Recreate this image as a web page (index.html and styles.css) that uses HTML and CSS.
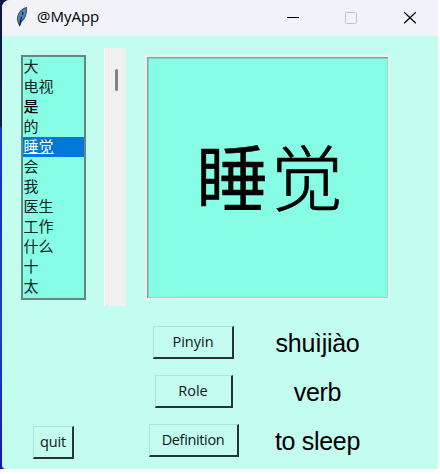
FILE: index.html
```html
<!DOCTYPE html>
<html lang="en">
<head>
<meta charset="utf-8">
<title>@MyApp</title>
<link rel="stylesheet" href="styles.css">
</head>
<body>
<div class="desktop">
  <div class="window">
    <header class="titlebar">
      <svg class="feather" width="14" height="22" viewBox="0 0 14 22">
        <path d="M11.500 1.500C8 2 4 6 2.700 10.500L2.500 14.500 4.500 19.500 6.500 15.500C10 12.500 11.800 6.500 11.500 1.500Z" fill="#4c88d0" stroke="#4b5158" stroke-width="1.1"/>
        <path d="M8 6L7.300 9M6.500 10.500L4.600 19.500" fill="none" stroke="#14202e" stroke-width="1.3"/>
      </svg>
      <span class="title">@MyApp</span>
      <svg class="controls" width="132" height="14" viewBox="0 0 132 14">
        <path d="M1 7.500H13" stroke="#000"/>
        <rect x="59.500" y="2.500" width="11" height="11" rx="1" fill="none" stroke="#c2c3ca"/>
        <path d="M118.200 2.200L129.800 13.300M129.800 2.200L118.200 13.300" stroke="#000" stroke-width="1.200"/>
      </svg>
    </header>
    <main class="client">
      <aside class="sidebar">
        <ul class="list">
          <li>大</li><li>电视</li><li class="heavy">是</li><li>的</li><li class="selected">睡觉</li><li>会</li>
          <li>我</li><li>医生</li><li>工作</li><li>什么</li><li>十</li><li>太</li>
        </ul>
        <button class="btn quit">quit</button>
      </aside>
      <div class="scrollbar"><div class="thumb"></div></div>
      <section class="card-area">
        <div class="card"><span class="strong">睡</span><span class="light">觉</span></div>
        <div class="answers">
          <div class="cell"><button class="btn pinyin">Pinyin</button></div><div class="answer">shuìjiào</div>
          <div class="cell"><button class="btn role">Role</button></div><div class="answer">verb</div>
          <div class="cell"><button class="btn definition">Definition</button></div><div class="answer">to sleep</div>
        </div>
      </section>
    </main>
  </div>
</div>
</body>
</html>
```
FILE: styles.css
```css
* { box-sizing: border-box; }
body { margin: 0; background: #fff; overflow: hidden; }
.desktop {
  width: 438px; height: 469px; padding-left: 2px;
  background: linear-gradient(#0b1745 0, #0d1c50 126px, #1a35d2 128px, #1535c8 220px, #1a3fd0 330px, #1117b8 469px);
}
.window {
  height: 469px; overflow: hidden; background: #c3fdef;
  border-radius: 8px 0 0 4px;
  display: flex; flex-direction: column;
}
.titlebar {
  height: 36px; flex: none; background: #f1f3f9;
  display: flex; align-items: center;
}
.feather { margin: -3px 0 0 13px; }
.title {
  margin: -4px 0 0 8px; width: 80px;
  font: 15px/20px "Open Sans", sans-serif; color: #000;
}
.controls { margin: -3px 0 0 169px; flex: none; }
.client { flex: 1; display: flex; padding-left: 19px; }
.sidebar { width: 83px; padding-top: 19px; display: flex; flex-direction: column; align-items: flex-start; }
.list {
  margin: 0; padding: 0; list-style: none; width: 65px; height: 245px;
  background: #86fde4; border: 2px solid #63877e;
  font: 15px/18px "Noto Sans CJK SC", sans-serif; color: #10241f;
}
.list li { height: 20px; padding-left: .6px; }
.list .heavy { font-weight: 500; color: #000; }
.list .selected { background: #0078d7; color: #fff; text-decoration: underline; }
.btn {
  height: 33px; padding: 0; border: 1px solid #aee5d8;
  border-right: 2px solid #27332f; border-bottom: 2px solid #27332f;
  border-radius: 0; background: #c3fdef; color: #101614;
  font: 14.5px/20px "Open Sans", sans-serif;
}
.quit { width: 41px; margin: 126px 0 0 12px; letter-spacing: -.2px; }
.scrollbar {
  width: 22px; height: 258px; margin-top: 12px; padding: 21px 0 0 10px;
  background: #f0f0f0; border-left: 1px solid #fff;
}
.thumb { width: 3px; height: 22px; border-radius: 2px; background: #858585; }
.card-area { margin: 19px 0 0 19px; width: 245px; }
.card {
  height: 245px; background: #86fde4; border: 2px solid #ededed;
  box-shadow: inset 1px 1px #7fa39b, inset 2px 2px #7bd5c2, inset -1px -1px #7be6d0;
  display: flex; align-items: center; justify-content: center; gap: 3px;
  padding: 0 0 7px 4px;
  font: 72px/100px "Noto Sans CJK SC", sans-serif; color: #000;
}
.strong { -webkit-text-stroke: .4px #000; }
.light { font-weight: 300; -webkit-text-stroke: .7px #000; }
.answers {
  display: grid; grid-template-columns: 97px 150px;
  grid-auto-rows: 49px; margin-top: 18px;
}
.cell { padding-top: 8px; display: flex; justify-content: center; align-items: flex-start; }
.pinyin { width: 81px; }
.role { width: 78px; }
.definition { width: 90px; letter-spacing: -.35px; }
.answer {
  text-align: center; padding: 10px 0 0 1px; color: #000;
  font: 25px/30px "Liberation Sans", sans-serif; letter-spacing: -.3px; white-space: nowrap;
}
```
